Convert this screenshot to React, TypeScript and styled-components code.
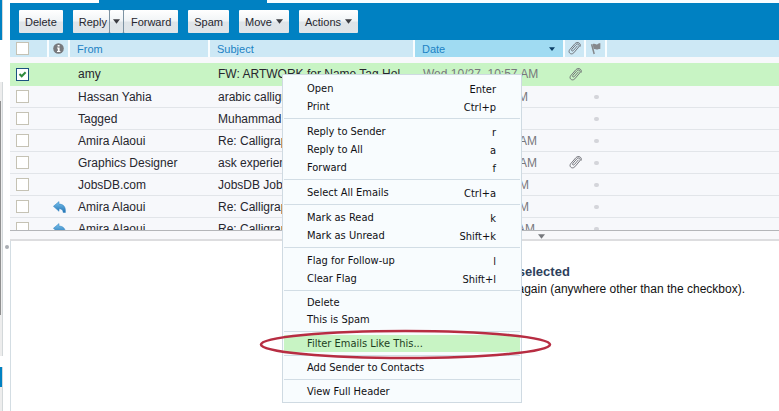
import React, { useState } from "react";
import styled, { createGlobalStyle, css } from "styled-components";

const GlobalStyle = createGlobalStyle`
  * { box-sizing: border-box; }
  html, body, #root { height: 100%; }
  body {
    margin: 0;
    overflow: hidden;
    background: #ffffff;
    color: #26262e;
    font: 12px/16px "Liberation Sans", Arial, sans-serif;
  }
  button { font: inherit; color: inherit; margin: 0; }
`;

const BLUE = "#0081c2";

const Page = styled.div`
  position: relative;
  display: flex;
  min-height: 100%;
`;

/* Edge of the folder sidebar */
const Sidebar = styled.aside`
  flex: none;
  display: flex;
  flex-direction: column;
  width: 3px;
  margin-right: 7px;
`;

const SideBlock = styled.div<{ $h?: number; $tone: "blue" | "light" | "thumb" | "gap" }>`
  ${(p) => (p.$h ? `flex: none; height: ${p.$h}px;` : "flex: 1;")}
  border-right: 1px solid #d3d8da;
  ${(p) =>
    ({
      blue: `background: ${BLUE};`,
      light: "background: #ededed;",
      thumb: "background: #ededed; border-left: 1px solid #8f8f8f;",
      gap: "background: #ffffff; border-right-color: #ffffff;",
    })[p.$tone]}
`;

const Main = styled.main`
  flex: 1;
  min-width: 0;
  display: flex;
  flex-direction: column;
`;

const TabStrip = styled.div`
  flex: none;
  display: flex;
  height: 3px;
  background: ${BLUE};
`;
const OpenTab = styled.div`
  width: 89px;
  background: #ffffff;
`;
const TabRest = styled.div`
  flex: 1;
  margin-left: 168px;
  background: #f9fdff;
`;

const Toolbar = styled.div`
  flex: none;
  display: flex;
  gap: 10px;
  height: 37px;
  padding: 7px 9px;
  background: ${BLUE};
`;
const ButtonGroup = styled.div`
  display: flex;
  gap: 1px;
  background: #7d93a3;
`;
const ToolButton = styled.button<{ $part?: "lead" | "arrow" | "tail" }>`
  display: flex;
  align-items: center;
  justify-content: center;
  gap: 4px;
  height: 23px;
  padding: ${(p) => ({ lead: "0 2px 0 6px", arrow: "0 3px", tail: "0 7px" })[p.$part as string] || "0 6px"};
  border: 0;
  border-radius: 1px;
  background: linear-gradient(#ffffff, #f1f4f6 48%, #dfe4e8 52%, #e0e5e9);
  font-size: 11px;
`;

const List = styled.div`
  flex: none;
  height: 190px;
  overflow: hidden;
  background: #f7f8fb;
`;
const Table = styled.table`
  width: 100%;
  table-layout: fixed;
  border-collapse: separate;
  border-spacing: 0;
`;
const Col = styled.col<{ $w?: number }>`
  width: ${(p) => (p.$w ? `${p.$w}px` : "auto")};
`;
const Th = styled.th<{ $sorted?: boolean }>`
  height: 17px;
  padding: 0 8px 0 7px;
  border-right: 2px solid #f9fdff;
  background: ${(p) => (p.$sorted ? "#a0dbf2" : "#cde8f5")};
  color: #1c82c4;
  font-size: 11px;
  font-weight: normal;
  line-height: 16px;
  text-align: left;
  white-space: nowrap;
  &:last-child { border-right: 0; }
`;
const ThIcon = styled(Th)`
  padding: 0;
  svg { display: block; margin: 0 auto; }
`;
const SortLine = styled.div`
  display: flex;
  align-items: center;
  justify-content: space-between;
`;
const SpacerCell = styled.td`
  height: 6px;
  padding: 0;
`;
const Row = styled.tr<{ $selected?: boolean }>`
  td {
    height: ${(p) => (p.$selected ? 23 : 22)}px;
    border-bottom: 1px solid ${(p) => (p.$selected ? "#c8f4c4" : "#e2e5e9")};
    background: ${(p) => (p.$selected ? "#c8f4c4" : "#f7f8fb")};
  }
`;
const Td = styled.td<{ $muted?: boolean }>`
  padding: 0 8px;
  overflow: hidden;
  white-space: nowrap;
  color: ${(p) => (p.$muted ? "#77777c" : "#26262e")};
`;
const TdIcon = styled.td`
  padding: 0;
  svg { display: block; margin: 0 auto; }
`;
const CheckCell = styled.td`
  padding: 0 0 0 6px;
`;
const Check = styled.input`
  appearance: none;
  display: block;
  width: 13px;
  height: 13px;
  margin: 0;
  border: 1px solid #c5c2b4;
  background: #ffffff;
  &:checked {
    border-color: #1c5180;
    background: #ffffff
      url("data:image/svg+xml,%3Csvg xmlns='http://www.w3.org/2000/svg' viewBox='0 0 11 11'%3E%3Cpath d='M2.5 5l2.2 2.3L8.6 3.2' fill='none' stroke='%232f8a3c' stroke-width='2'/%3E%3C/svg%3E");
  }
`;
const HeadCheck = styled(Check)`
  margin-left: 6px;
`;
const Dot = styled.span`
  display: block;
  width: 5px;
  height: 4px;
  margin: 0 auto;
  border-radius: 2px;
  background: #d4d5da;
`;

const Splitter = styled.div`
  flex: none;
  display: flex;
  justify-content: center;
  height: 11px;
  padding: 3px 0 0 294px;
  border-top: 1px solid #b4b5b8;
  border-bottom: 2px solid #dddddf;
  background: #f8f8fa;
`;

const Preview = styled.section`
  flex: 1;
  display: flex;
  justify-content: flex-end;
  padding: 22px 34px 0 0;
  border-left: 1px solid #d3dde3;
  background: #ffffff;
`;
const Grip = styled.span`
  position: absolute;
  left: 5px;
  top: 245px;
  width: 4px;
  height: 4px;
  border-radius: 2px;
  background: #a9adb2;
`;
const PreviewTitle = styled.h2`
  margin: 0;
  color: #2e3f5c;
  font-size: 13px;
  line-height: 18px;
`;
const PreviewText = styled.p`
  margin: 0;
  color: #111111;
  line-height: 16px;
`;

const Menu = styled.div`
  position: absolute;
  left: 282px;
  top: 74px;
  width: 240px;
  padding: 4px 1px 2px;
  border: 1px solid #cfdae2;
  background: #f8fcfe;
  color: #101014;
  font: 11px/17px "DejaVu Sans Condensed", "DejaVu Sans", sans-serif;
`;
const Group = styled.div`
  & + & {
    margin-top: 3px;
    padding-top: 3px;
    border-top: 1px solid #d2dde5;
  }
`;
const Item = styled.button<{ $active?: boolean; $tall?: boolean }>`
  display: flex;
  align-items: center;
  justify-content: space-between;
  width: 100%;
  height: ${(p) => (p.$tall ? 18 : 17)}px;
  padding: 0 24px 0 23px;
  border: 0;
  background: transparent;
  ${(p) => p.$active && css`background: #c8f4c4; color: #1d3d1d;`}
`;
const Shortcut = styled.span`
  padding-top: 2px;
`;

const Ring = styled.svg`
  position: absolute;
  left: 258px;
  top: 328px;
  pointer-events: none;
`;

const Caret = ({ size = 7, color = "#3c3c42" }: { size?: number; color?: string }) => (
  <svg width={size} height={size === 7 ? 5 : 4} viewBox="0 0 8 5" aria-hidden="true">
    <path d="M0 0h8L4 5z" fill={color} />
  </svg>
);

const Clip = () => (
  <svg width="15" height="15" viewBox="0 0 15 15" fill="none" stroke="#66686e" strokeWidth="0.9" strokeLinecap="round" aria-label="Attachment">
    <path d="M10.300 5 6.300 9.600C5.200 10.700 3.900 9.500 4.900 8.300L9 3.700C10.800 1.900 13.300 3.900 11.700 6L6.800 11.800C4.300 14.500.5 11.600 2.700 8.700L7.900 2.700C10.400.2 14.500 2.200 13.200 5.300" />
  </svg>
);

const Flag = () => (
  <svg width="12" height="13" viewBox="0 0 12 13" aria-label="Flag">
    <path d="M1.600 2.200 4.200 12" stroke="#85888c" strokeWidth="1.500" fill="none" />
    <path d="M2.600 2.300C4.500.8 5.600 3 7.400 2.200 8.400 1.700 9 1 10.400 1.300L10.300 7C8.800 6.500 8 7.700 6.600 7.600 5.400 7.400 5 6.700 3.800 7.400z" fill="#85888c" />
  </svg>
);

const Info = () => (
  <svg width="11" height="11" viewBox="0 0 11 11" aria-label="Status">
    <circle cx="5.500" cy="5.500" r="5.300" fill="#77797d" />
    <path d="M4.600 2h2v1.500h-2zM4 4.400h2.600v3.500h.8V9H4V7.900h.8V5.500H4z" fill="#ffffff" />
  </svg>
);

const Replied = () => (
  <svg width="13" height="12" viewBox="0 0 13 12" aria-label="Replied">
    <defs>
      <linearGradient id="replied" x1="0" y1="0" x2="0" y2="1">
        <stop offset="0" stopColor="#7cc4ee" />
        <stop offset="1" stopColor="#2272b4" />
      </linearGradient>
    </defs>
    <path d="M.4 5.300 6 .6v2.500c4.200 0 6.900 2.400 6.400 8.400H10.200C10 9 8.600 7.700 6 7.800v2.500z" fill="url(#replied)" stroke="#2f83c0" strokeWidth=".5" />
  </svg>
);

type Mail = { from: string; subject: string; date: string; clip?: boolean; replied?: boolean };

const mails: Mail[] = [
  { from: "amy", subject: "FW: ARTWORK for Name Tag Hol", date: "Wed 10/27, 10:57 AM", clip: true },
  { from: "Hassan Yahia", subject: "arabic calligraphy", date: "Tue 10/26, 9:14 PM" },
  { from: "Tagged", subject: "Muhammad", date: "Tue 10/26" },
  { from: "Amira Alaoui", subject: "Re: Calligraphy", date: "Mon 10/25, 10:20 AM" },
  { from: "Graphics Designer", subject: "ask experience", date: "Mon 10/25, 10:08 AM", clip: true },
  { from: "JobsDB.com", subject: "JobsDB Job Alert", date: "Sun 10/24, 6:31 PM" },
  { from: "Amira Alaoui", subject: "Re: Calligraphy", date: "Sun 10/24, 2:45 PM", replied: true },
  { from: "Amira Alaoui", subject: "Re: Calligraphy", date: "Sun 10/24, 10:02 AM", replied: true },
];

const menu: [string, string?][][] = [
  [["Open", "Enter"], ["Print", "Ctrl+p"]],
  [["Reply to Sender", "r"], ["Reply to All", "a"], ["Forward", "f"]],
  [["Select All Emails", "Ctrl+a"]],
  [["Mark as Read", "k"], ["Mark as Unread", "Shift+k"]],
  [["Flag for Follow-up", "l"], ["Clear Flag", "Shift+l"]],
  [["Delete"], ["This is Spam"]],
  [["Filter Emails Like This..."]],
  [["Add Sender to Contacts"]],
  [["View Full Header"]],
];

export default function App() {
  const [checked, setChecked] = useState<number[]>([0]);
  const toggle = (i: number) =>
    setChecked((c) => (c.includes(i) ? c.filter((n) => n !== i) : [...c, i]));

  return (
    <>
      <GlobalStyle />
      <Page>
        <Sidebar>
          <SideBlock $tone="blue" $h={40} />
          <SideBlock $tone="gap" $h={42} />
          <SideBlock $tone="light" $h={19} />
          <SideBlock $tone="thumb" $h={214} />
          <SideBlock $tone="light" $h={41} />
          <SideBlock $tone="gap" $h={11} />
          <SideBlock $tone="blue" $h={20} />
          <SideBlock $tone="light" />
        </Sidebar>
        <Main>
          <TabStrip>
            <OpenTab />
            <TabRest />
          </TabStrip>
          <Toolbar role="toolbar">
            <ToolButton>Delete</ToolButton>
            <ButtonGroup>
              <ToolButton $part="lead">Reply</ToolButton>
              <ToolButton $part="arrow" aria-label="Reply options"><Caret /></ToolButton>
              <ToolButton $part="tail">Forward</ToolButton>
            </ButtonGroup>
            <ToolButton>Spam</ToolButton>
            <ToolButton>Move <Caret /></ToolButton>
            <ToolButton>Actions <Caret /></ToolButton>
          </Toolbar>
          <List>
            <Table>
              <colgroup>
                <Col $w={39} />
                <Col $w={21} />
                <Col $w={140} />
                <Col $w={205} />
                <Col $w={150} />
                <Col $w={21} />
                <Col $w={21} />
                <Col />
              </colgroup>
              <thead>
                <tr>
                  <ThIcon><HeadCheck type="checkbox" aria-label="Select all" /></ThIcon>
                  <ThIcon><Info /></ThIcon>
                  <Th>From</Th>
                  <Th>Subject</Th>
                  <Th $sorted>
                    <SortLine>Date <Caret size={6} color="#0b3f66" /></SortLine>
                  </Th>
                  <ThIcon><Clip /></ThIcon>
                  <ThIcon><Flag /></ThIcon>
                  <Th />
                </tr>
              </thead>
              <tbody>
                <tr><SpacerCell colSpan={8} /></tr>
                {mails.map((m, i) => (
                  <Row key={i} $selected={i === 0}>
                    <CheckCell>
                      <Check
                        type="checkbox"
                        aria-label={`Select ${m.from}`}
                        checked={checked.includes(i)}
                        onChange={() => toggle(i)}
                      />
                    </CheckCell>
                    <TdIcon>{m.replied && <Replied />}</TdIcon>
                    <Td>{m.from}</Td>
                    <Td>{m.subject}</Td>
                    <Td $muted>{m.date}</Td>
                    <TdIcon>{m.clip && <Clip />}</TdIcon>
                    <TdIcon>{i > 0 && <Dot />}</TdIcon>
                    <td />
                  </Row>
                ))}
              </tbody>
            </Table>
          </List>
          <Splitter><Caret color="#77797d" /></Splitter>
          <Preview>
            <div>
              <PreviewTitle>You have one email item selected</PreviewTitle>
              <PreviewText>To open it, click on the email again (anywhere other than the checkbox).</PreviewText>
            </div>
          </Preview>
        </Main>
        <Grip />
        <Menu role="menu">
          {menu.map((group, g) => (
            <Group key={g}>
              {group.map(([label, key]) => (
                <Item key={label} role="menuitem" $tall={!!key} $active={label.startsWith("Filter")}>
                  <span>{label}</span>
                  {key && <Shortcut>{key}</Shortcut>}
                </Item>
              ))}
            </Group>
          ))}
        </Menu>
        <Ring width="296" height="32" viewBox="0 0 296 32" aria-hidden="true">
          <ellipse cx="147.500" cy="16.500" rx="144.500" ry="13.500" fill="none" stroke="#b72d42" strokeWidth="2.600" />
        </Ring>
      </Page>
    </>
  );
}
